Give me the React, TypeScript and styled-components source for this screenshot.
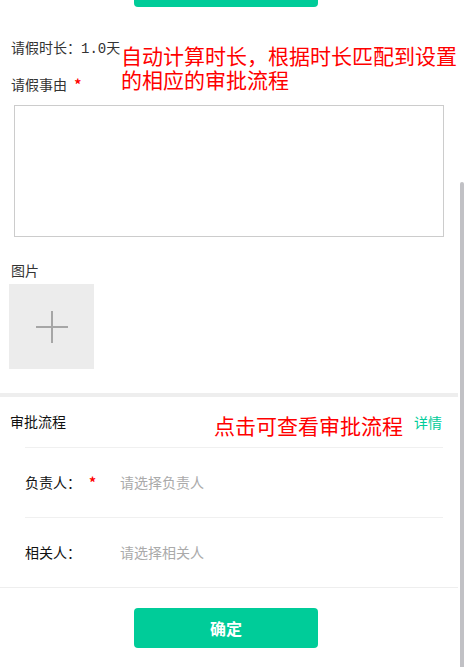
import styled, { createGlobalStyle } from "styled-components";

const GREEN = "#00cc99";

const GlobalStyle = createGlobalStyle`
  html, body {
    margin: 0;
    padding: 0;
    background: #fff;
  }
  body {
    font-family: "Noto Sans CJK SC", "Liberation Sans", sans-serif;
    font-size: 14px;
    color: #333;
  }
`;

const App = () => {
  return (
    <Page>
      <GlobalStyle />
      <Main>
        <TopButton />
        <FormSection>
          <Label>
            请假时长：<Mono>1.0</Mono>天
          </Label>
          <Label $gap={17}>
            请假事由 <Star>*</Star>
          </Label>
          <Note>
            自动计算时长，根据时长匹配到设置
            <br />
            的相应的审批流程
          </Note>
          <TextArea />
          <Label $gap={23}>图片</Label>
          <Upload>
            <Plus />
          </Upload>
        </FormSection>
        <Band />
        <FlowHeader>
          <FlowTitle>审批流程</FlowTitle>
          <InlineNote>点击可查看审批流程</InlineNote>
          <DetailLink>详情</DetailLink>
        </FlowHeader>
        <PeopleList>
          <PersonRow>
            <PersonLabel>
              负责人：<Star $gap={8}>*</Star>
            </PersonLabel>
            <Placeholder>请选择负责人</Placeholder>
          </PersonRow>
          <PersonRow>
            <PersonLabel>相关人：</PersonLabel>
            <Placeholder>请选择相关人</Placeholder>
          </PersonRow>
        </PeopleList>
        <Footer>
          <SubmitButton>确定</SubmitButton>
        </Footer>
      </Main>
      <ScrollTrack>
        <ScrollThumb />
      </ScrollTrack>
    </Page>
  );
};

const Page = styled.div`
  display: flex;
  width: 464px;
  min-height: 667px;
  overflow: hidden;
`;

const Main = styled.div`
  width: 458px;
  display: flex;
  flex-direction: column;
`;

const TopButton = styled.div`
  margin-left: 134px;
  width: 184px;
  height: 7px;
  background: ${GREEN};
  border-radius: 0 0 4px 4px;
`;

const FormSection = styled.div`
  position: relative;
  display: flex;
  flex-direction: column;
  align-items: flex-start;
  padding-top: 30px;
  padding-bottom: 24px;
`;

const Label = styled.div<{ $gap?: number }>`
  margin-top: ${(p) => p.$gap ?? 0}px;
  margin-left: 11px;
  height: 20px;
  line-height: 20px;
  color: #333;
  white-space: nowrap;
`;

const Mono = styled.span`
  font-family: "Liberation Mono", monospace;
  line-height: 1;
`;

const Star = styled.span<{ $gap?: number }>`
  color: #ff0000;
  font-weight: bold;
  margin-left: ${(p) => p.$gap ?? 4}px;
  line-height: 1;
`;

// annotation laid over the form
const Note = styled.div`
  position: absolute;
  left: 121px;
  top: 36px;
  font-size: 21px;
  line-height: 24px;
  color: #ff0000;
  white-space: nowrap;
`;

const TextArea = styled.div`
  box-sizing: border-box;
  margin: 11px 0 0 14px;
  width: 430px;
  height: 132px;
  border: 1px solid #ccc;
  background: #fff;
`;

const Upload = styled.div`
  margin: 4px 0 0 9px;
  width: 85px;
  height: 85px;
  background: #ececec;
  display: flex;
  align-items: center;
  justify-content: center;
`;

const Plus = styled.div`
  position: relative;
  width: 32px;
  height: 32px;

  &::before,
  &::after {
    content: "";
    position: absolute;
    background: #a6a6a6;
  }
  &::before {
    left: 0;
    right: 0;
    top: 15px;
    height: 2px;
  }
  &::after {
    top: 0;
    bottom: 0;
    left: 15px;
    width: 2px;
  }
`;

const Band = styled.div`
  height: 4px;
  background: #eeeeee;
`;

const FlowHeader = styled.div`
  display: flex;
  align-items: center;
  height: 50px;
  padding: 0 16px 0 10px;
`;

const FlowTitle = styled.div`
  color: #111;
  flex: 1;
  margin-bottom: 2px;
`;

const InlineNote = styled.div`
  font-size: 21px;
  line-height: 26px;
  color: #ff0000;
  margin-top: 6px;
  margin-right: 11px;
`;

const DetailLink = styled.div`
  color: ${GREEN};
`;

const PeopleList = styled.div`
  border-bottom: 1px solid #eeeeee;
`;

const PersonRow = styled.div`
  display: flex;
  align-items: center;
  height: 69px;
  margin: 0 15px 0 25px;
  border-top: 1px solid #f0f0f0;
`;

const PersonLabel = styled.div`
  width: 95px;
  color: #111;
  margin-bottom: 2px;
`;

const Placeholder = styled.div`
  color: #aaaaaa;
  margin-bottom: 2px;
`;

const Footer = styled.div`
  display: flex;
  padding: 20px 0 19px 134px;
`;

const SubmitButton = styled.button`
  width: 184px;
  height: 40px;
  border: none;
  border-radius: 4px;
  background: ${GREEN};
  color: #fff;
  font-family: "Noto Sans CJK SC", sans-serif;
  font-size: 16px;
  font-weight: bold;
`;

const ScrollTrack = styled.div`
  width: 6px;
  display: flex;
  flex-direction: column;
  align-items: flex-end;
  padding-top: 182px;
`;

const ScrollThumb = styled.div`
  width: 4px;
  flex: 1;
  background: #c1c1c5;
  border-radius: 2px 2px 0 0;
`;

export default App;
